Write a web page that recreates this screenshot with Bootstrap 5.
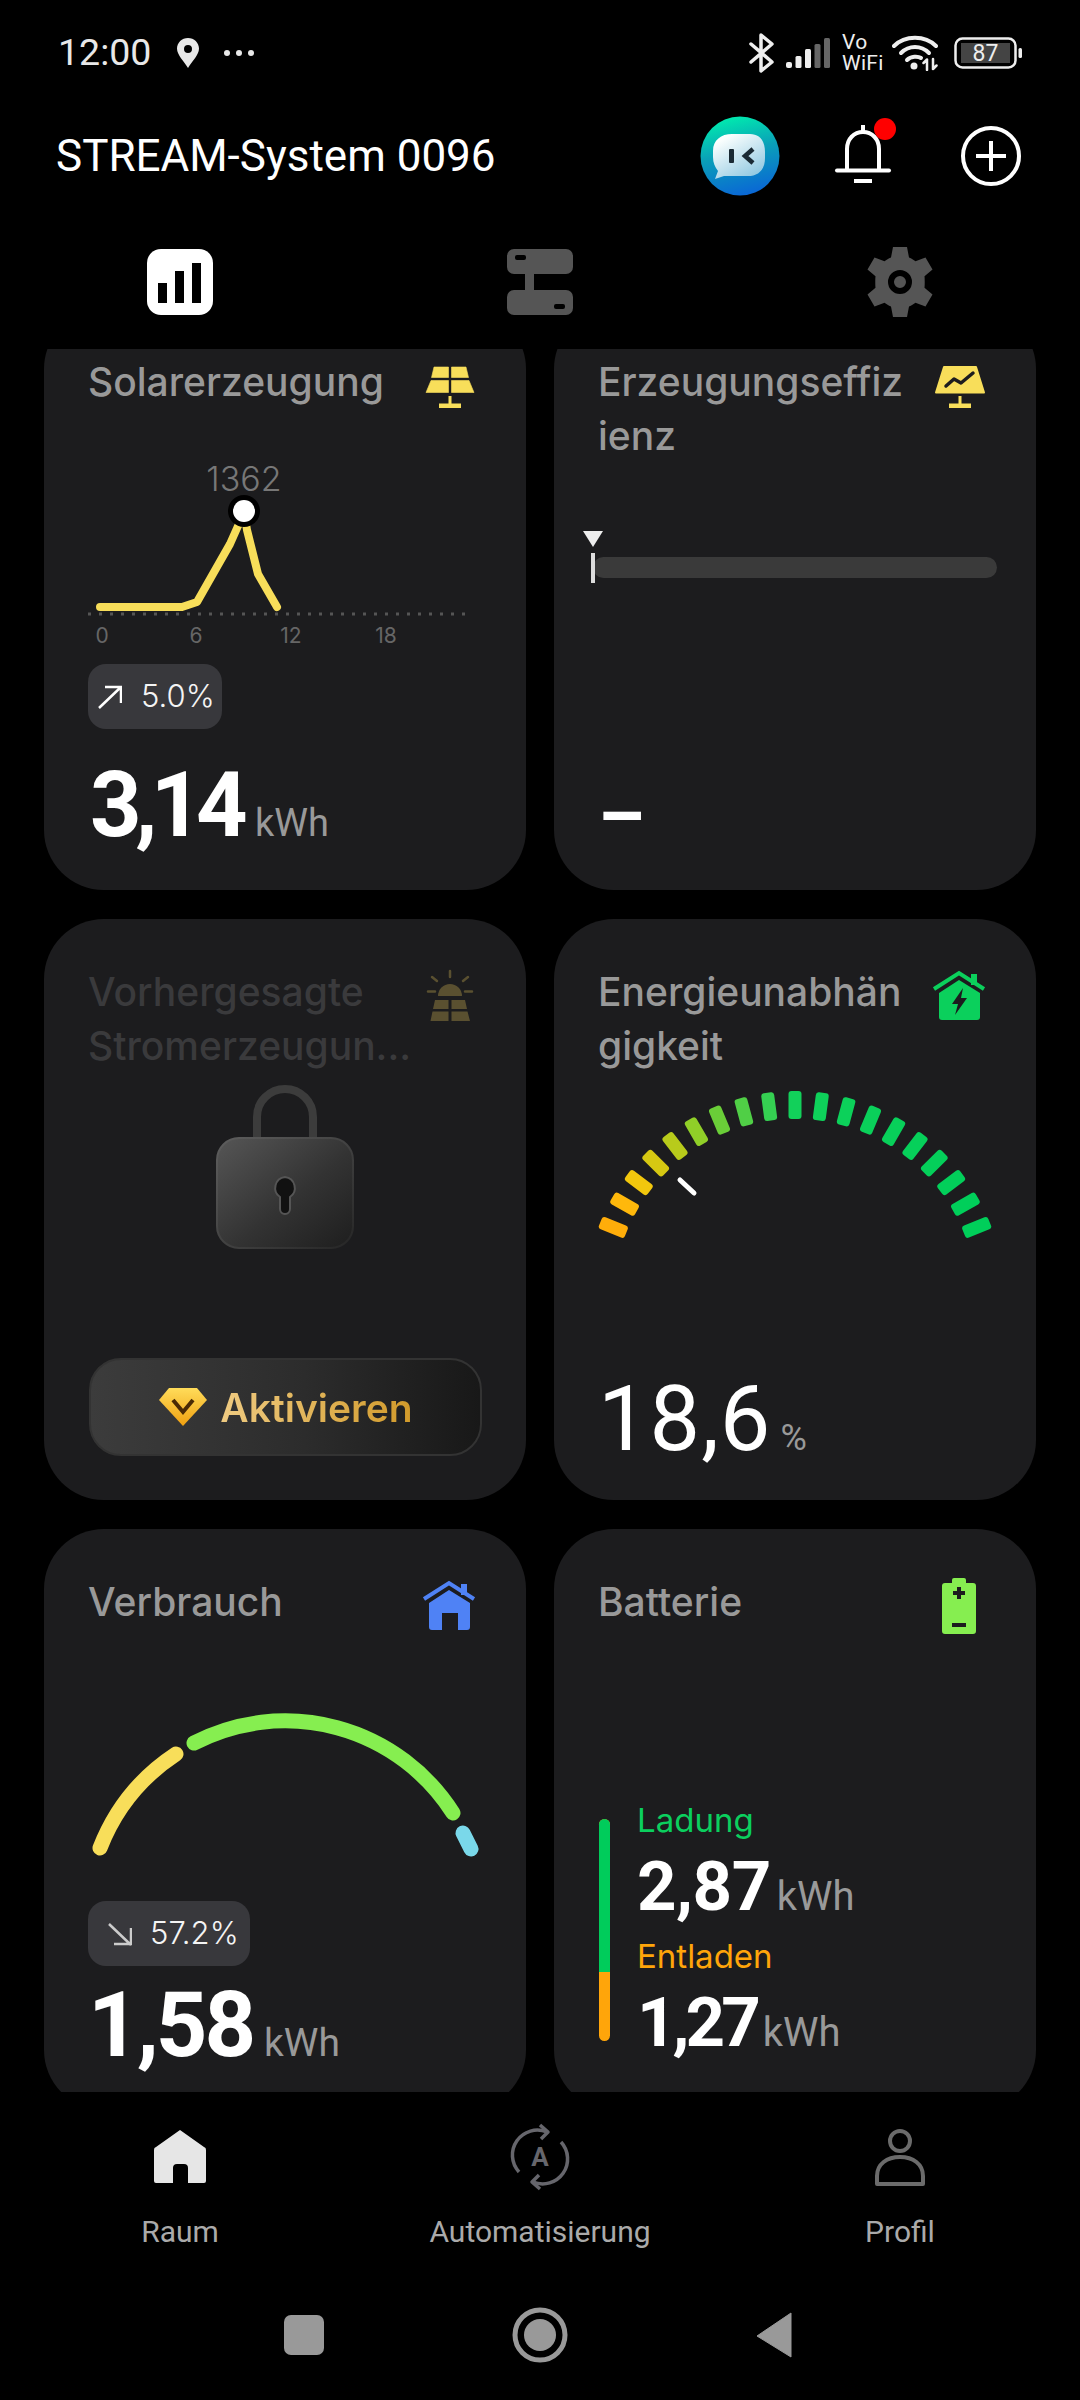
<!DOCTYPE html>
<html lang="de">

<head>
    <meta charset="UTF-8">
    <title>STREAM-System 0096</title>
    <link href="https://cdn.jsdelivr.net/npm/bootstrap@5.3.0/dist/css/bootstrap.min.css" rel="stylesheet">
    <style>
        html, body { background: #000; }
        body { width: 1080px; height: 2400px; overflow: hidden; font-family: Roboto, "Liberation Sans", sans-serif; color: #fff; }
        svg { display: block; }

        /* top area */
        .status-bar { height: 106px; padding: 0 58px; }
        .clock { font-size: 37.5px; color: #e8e8e8; line-height: 1; margin-right: 26px; }
        .vowifi { width: 42px; font-size: 21px; line-height: 21px; letter-spacing: 0.3px; color: #eee; white-space: nowrap; }
        .wifi-ico { margin: 0 4px 0 -4px; }
        .title-row { height: 100px; padding: 0 26px 0 56px; }
        .page-title { font-size: 44px; font-weight: 400; line-height: 1; margin: 0; color: #fff; }
        .act-slot { width: 125.5px; }
        .tab-row { height: 143px; padding-top: 41px; }

        /* tiles */
        .tile-scroll { flex: 1 1 0; min-height: 0; padding: 0 44px; }
        .tile-grid { --bs-gutter-x: 28px; --bs-gutter-y: 29px; margin-top: -69px; }
        .tile { --bs-card-bg: #1c1c1e; --bs-card-border-width: 0; --bs-card-border-radius: 60px; height: 581px; padding: 46px 44px 0; }
        .tile-head { height: 108px; }
        .tile-title { font-family: Inter, "Liberation Sans", sans-serif; font-size: 39px; line-height: 54px; color: #999; margin: 0; white-space: nowrap; }
        .tile-title.dim { color: #3a3a3c; }
        .tile-ico { width: 64px; height: 64px; flex: none; }
        .tile-foot { margin-top: auto; padding-bottom: 38px; }
        .foot-low { padding-bottom: 35px; }
        .foot-dash { padding-bottom: 28px; }
        .big-val { font-weight: 700; font-size: 90px; line-height: 90px; color: #fff; }
        .tight { letter-spacing: -6.5px; margin-left: 2px; }
        .tight-sm { letter-spacing: -3px; }
        .thin-val { font-weight: 400; letter-spacing: 1px; }
        .unit { font-size: 38px; color: #999; margin-left: 14px; }
        .unit-near { margin-left: 11px; font-size: 39px; }
        .pct-unit { font-size: 36px; color: #999; margin-left: 9px; }
        .dash-val { font-weight: 700; font-size: 74px; line-height: 90px; color: #fff; margin-left: 0; }
        .trend-pill { height: 65px; background: #38383c; border-radius: 18px; font-family: Inter, sans-serif; font-weight: 300; font-size: 31px; color: #f4f4f4; }
        .pill-up { width: 134px; padding-left: 10px; margin-top: 14px; gap: 19px; }
        .pill-down { width: 162px; padding-left: 20px; margin-top: 40px; gap: 18px; }

        /* solar chart */
        .peak-label { position: absolute; left: 0; width: 312px; top: 2px; text-align: center; font-family: Inter, sans-serif; font-weight: 300; font-size: 34px; line-height: 28px; color: #777; }

        /* efficiency bar */
        .eff-wrap { margin: 94px 0 0 -5px; width: 404px; }
        .eff-bar { --bs-progress-bg: #3a3a3a; --bs-progress-height: 21px; --bs-progress-border-radius: 11px; }
        .eff-tick { position: absolute; left: -2px; top: -4px; width: 4px; height: 30px; background: #ddd; }
        .eff-arrow { position: absolute; left: -10px; top: -26px; width: 0; height: 0; border-left: 10px solid transparent; border-right: 10px solid transparent; border-top: 16px solid #eee; }

        /* activate button */
        .tile-foot-btn { margin-top: auto; padding-bottom: 44px; }
        .activate-btn { width: 393px; height: 98px; margin-left: 1px; border-radius: 32px; border: 2px solid #333; background: linear-gradient(90deg, #3c3c3c, #2c2c2c 55%, #181818); gap: 12px; }
        .activate-text { font-family: Inter, sans-serif; font-weight: 600; font-size: 39px; line-height: 1; background: linear-gradient(90deg, #efcb82, #d19a2a); -webkit-background-clip: text; background-clip: text; color: transparent; }

        /* battery */
        .batt-block { margin-top: 117px; margin-left: 1px; gap: 27px; }
        .batt-bar { width: 11px; height: 222px; margin-top: 19px; border-radius: 6px; background: #ffa50a; flex: none; }
        .batt-bar-fill { height: 153px; background: #00cc5b; }
        .batt-stat { height: 136px; }
        .batt-label { font-family: Inter, sans-serif; font-size: 33px; line-height: 40px; }
        .col-charge { color: #0bcf5e; }
        .col-discharge { color: #ffa50a; }
        .batt-val { font-weight: 700; font-size: 69px; line-height: 72px; margin-top: 11px; color: #fff; }
        .batt-val .unit { font-size: 40px; font-weight: 400; margin-left: 6px; letter-spacing: 0; }
        .batt-tight { letter-spacing: -4px; }
        .batt-tight-sm { letter-spacing: -0.5px; }

        /* bottom nav */
        .bottom-nav { height: 215px; padding-top: 30px; }
        .nav-ico { height: 70px; }
        .nav-label { font-size: 30px; line-height: 40px; color: #aaa; margin-top: 20px; }
        .sys-nav { height: 93px; }
        .sys-slot { width: 236px; height: 56px; }
    </style>
</head>

<body>
    <div class="d-flex flex-column vh-100">

        <!-- status bar -->
        <div class="status-bar d-flex align-items-center flex-shrink-0">
            <span class="clock">12:00</span>
            <svg width="22" height="30" viewBox="0 0 22 30"><path fill-rule="evenodd" fill="#e8e8e8" d="M11 0C4.9 0 0 4.7 0 10.6 0 17 7 23.500 11 30c4-6.500 11-13 11-19.400C22 4.700 17.100 0 11 0ZM11 7a4 4 0 1 1 0 8 4 4 0 0 1 0-8Z"/></svg>
            <svg class="ms-4" width="32" height="8" viewBox="0 0 32 8" fill="#e8e8e8"><circle cx="4" cy="4" r="3"/><circle cx="16" cy="4" r="3"/><circle cx="28" cy="4" r="3"/></svg>
            <div class="ms-auto d-flex align-items-center status-icons" style="gap:12px">
                <svg width="25" height="40" viewBox="0 0 25 40" fill="none" stroke="#eee" stroke-width="3.500" stroke-linejoin="round" stroke-linecap="round"><path d="M2 11L23 29L12 38V2L23 11L2 29"/></svg>
                <svg width="44" height="30" viewBox="0 0 44 30"><g fill="#eee"><rect x="0" y="24" width="6" height="6" rx="2"/><rect x="9.500" y="18" width="6" height="12" rx="1.500"/><rect x="19" y="11" width="6" height="19" rx="1.500"/></g><g fill="#666"><rect x="28.500" y="6" width="6" height="24" rx="1.500"/><rect x="38" y="0" width="6" height="30" rx="1.500"/></g></svg>
                <div class="vowifi"><div>Vo</div><div>WiFi</div></div>
                <svg class="wifi-ico" width="46" height="36" viewBox="0 0 46 36" fill="none" stroke="#eee" stroke-linecap="round"><path stroke-width="4" d="M2 11C13 0 33 0 44 11"/><path stroke-width="4" d="M9 18C17 10 29 10 37 18"/><path stroke-width="4" d="M15 25C19 21 26 21 29 23"/><circle cx="22" cy="31" r="3.500" fill="#eee" stroke="none"/><path stroke-width="2.500" d="M35 35V25M31.500 28L35 24.500M41 24V34M41 34L44.500 30.500"/></svg>
                <svg width="68" height="32" viewBox="0 0 68 32"><rect x="1.500" y="1.500" width="60" height="29" rx="7" fill="none" stroke="#eee" stroke-width="2.500"/><rect x="7" y="6" width="49" height="20" fill="#444"/><text x="31.500" y="24" text-anchor="middle" font-family="Roboto, sans-serif" font-size="23" fill="#eee">87</text><rect x="64.500" y="11" width="3.500" height="10" rx="1.500" fill="#eee"/></svg>
            </div>
        </div>

        <!-- title row -->
        <div class="title-row d-flex align-items-center flex-shrink-0">
            <h1 class="page-title">STREAM-System 0096</h1>
            <div class="ms-auto d-flex">
                <div class="act-slot d-flex justify-content-center">
                    <svg width="80" height="80" viewBox="0 0 80 80">
                        <defs>
                            <linearGradient id="avatarBg" x1="0.35" y1="0" x2="0.6" y2="1"><stop offset="0" stop-color="#00ecae"/><stop offset="0.45" stop-color="#0aa0b8"/><stop offset="1" stop-color="#0a66d6"/></linearGradient>
                            <linearGradient id="avatarBubble" x1="0.2" y1="0.1" x2="0.8" y2="1"><stop offset="0" stop-color="#fbfffe"/><stop offset="1" stop-color="#8cc6e0"/></linearGradient>
                        </defs>
                        <circle cx="40" cy="40" r="39.500" fill="url(#avatarBg)"/>
                        <path d="M32 18H50C59 18 65 24 65 36V42C65 54 58 60 48 60H24L15 63L18 55C15 51 13 47 13 41V35C13 24 21 18 32 18Z" fill="url(#avatarBubble)"/>
                        <rect x="29" y="33" width="5" height="14" rx="1" fill="#1a2a34"/>
                        <path d="M53 33L45 40L53 47" fill="none" stroke="#1a2a34" stroke-width="4.500"/>
                    </svg>
                </div>
                <div class="act-slot d-flex justify-content-center">
                    <svg width="80" height="80" viewBox="0 0 80 80" fill="none" stroke="#fff" stroke-width="4">
                        <path d="M19 54H21V33C21 23 28 16 37 16S53 23 53 33V54"/>
                        <path d="M11 54.500H63" stroke-linecap="round"/>
                        <path d="M37 9V16"/>
                        <path d="M28 65H46" stroke-width="4"/>
                        <circle cx="59" cy="13" r="11" fill="#f00" stroke="none"/>
                    </svg>
                </div>
                <div class="act-slot d-flex justify-content-center">
                    <svg width="80" height="80" viewBox="0 0 80 80" fill="none" stroke="#fff" stroke-width="4">
                        <circle cx="40" cy="40" r="28"/>
                        <path d="M25 40H55M40 25V55"/>
                    </svg>
                </div>
            </div>
        </div>

        <!-- tabs -->
        <div class="tab-row row g-0 flex-shrink-0">
            <div class="col-4 d-flex justify-content-center">
                <svg width="66" height="70" viewBox="0 0 66 70"><rect y="2" width="66" height="66" rx="14" fill="#fff"/><g fill="#000"><rect x="11" y="36" width="9" height="20"/><rect x="28" y="24" width="9" height="32"/><rect x="45" y="16" width="9" height="40"/></g></svg>
            </div>
            <div class="col-4 d-flex justify-content-center">
                <svg width="66" height="70" viewBox="0 0 66 70" fill="#555"><rect y="2" width="66" height="25" rx="7"/><rect y="43" width="66" height="25" rx="7"/><rect x="18" y="26" width="9" height="18"/><rect x="8" y="8" width="11" height="5" rx="2" fill="#000"/><rect x="47" y="57" width="11" height="5" rx="2" fill="#000"/></svg>
            </div>
            <div class="col-4 d-flex justify-content-center">
                <svg width="70" height="70" viewBox="0 0 70 70"><path fill="#555" fill-rule="evenodd" d="M28 0H42L44 10.500C46.500 11.500 48.500 12.700 50.500 14.200L60.500 10.500L67.500 22.500L59.500 29.300C59.800 31.900 59.800 38.100 59.500 40.700L67.500 47.500L60.500 59.500L50.500 55.800C48.500 57.300 46.500 58.500 44 59.500L42 70H28L26 59.500C23.500 58.500 21.500 57.300 19.500 55.800L9.500 59.500L2.500 47.500L10.500 40.700C10.200 38.100 10.200 31.900 10.500 29.300L2.500 22.500L9.500 10.500L19.500 14.200C21.500 12.700 23.500 11.500 26 10.500ZM35 23A12 12 0 1 0 35 47A12 12 0 1 0 35 23ZM35 29A6 6 0 1 1 35 41A6 6 0 1 1 35 29Z"/></svg>
            </div>
        </div>

        <!-- tiles -->
        <div class="tile-scroll overflow-hidden">
            <div class="row row-cols-2 tile-grid">

                <div class="col">
                    <div class="card tile">
                        <div class="tile-head d-flex justify-content-between">
                            <h2 class="tile-title">Solarerzeugung</h2>
                            <svg class="tile-ico" viewBox="0 0 64 64" fill="#f8de5a" stroke="#f8de5a" stroke-width="0.6" stroke-linejoin="round">
                                <path d="M16 12H30.500V22.500H13.500Z"/><path d="M33.500 12H48L50.500 22.500H33.500Z"/><path d="M13 25.500H30.500V37.500H8Z"/><path d="M33.500 25.500H51L56 37.500H33.500Z"/>
                                <rect x="30.500" y="41" width="3" height="8" stroke="none"/><rect x="21" y="48.500" width="22" height="4.500" stroke="none"/>
                            </svg>
                        </div>
                        <div class="position-relative">
                            <div class="peak-label">1362</div>
                            <svg width="394" height="187" viewBox="88 463 394 187">
                                <path d="M88 614H465" stroke="#555" stroke-width="3" stroke-dasharray="3 8"/>
                                <path d="M100 607H182L197 602L230 544L238 526L244 511L247 530L258 574L277 607" fill="none" stroke="#f8de5a" stroke-width="8" stroke-linecap="round" stroke-linejoin="round"/>
                                <circle cx="244" cy="511" r="16" fill="#000"/><circle cx="244" cy="511" r="11" fill="#fff"/>
                                <g font-family="Inter, sans-serif" font-size="21" fill="#666" text-anchor="middle"><text x="102" y="643">0</text><text x="196" y="643">6</text><text x="291" y="643">12</text><text x="386" y="643">18</text></g>
                            </svg>
                        </div>
                        <div class="trend-pill pill-up d-flex align-items-center">
                            <svg width="24" height="24" viewBox="0 0 24 24" fill="none" stroke="#fff" stroke-width="2.500"><path d="M1 23L23 2M7 2H23V18"/></svg>
                            <span>5.0%</span>
                        </div>
                        <div class="tile-foot d-flex align-items-baseline">
                            <span class="big-val tight">3,14</span><span class="unit">kWh</span>
                        </div>
                    </div>
                </div>

                <div class="col">
                    <div class="card tile">
                        <div class="tile-head d-flex justify-content-between">
                            <h2 class="tile-title">Erzeugungseffiz<br>ienz</h2>
                            <svg class="tile-ico" viewBox="0 0 64 64" fill="#f8de5a" stroke="#f8de5a" stroke-linejoin="round">
                                <path d="M16 12H48L56 37.500H8Z" stroke-width="2"/>
                                <path d="M18 31L26 24L33 28L45 18" fill="none" stroke="#1c1c1e" stroke-width="3.500" stroke-linecap="round"/>
                                <rect x="30.500" y="41" width="3" height="8" stroke="none"/><rect x="21" y="48.500" width="22" height="4.500" stroke="none"/>
                            </svg>
                        </div>
                        <div class="eff-wrap position-relative">
                            <div class="progress eff-bar"><div class="progress-bar" style="width:0%"></div></div>
                            <div class="eff-tick"></div>
                            <div class="eff-arrow"></div>
                        </div>
                        <div class="tile-foot foot-dash d-flex align-items-baseline">
                            <span class="dash-val">–</span>
                        </div>
                    </div>
                </div>

                <div class="col">
                    <div class="card tile">
                        <div class="tile-head d-flex justify-content-between">
                            <h2 class="tile-title dim">Vorhergesagte<br>Stromerzeugun...</h2>
                            <svg class="tile-ico" viewBox="0 0 64 64" fill="#5a5030">
                                <path d="M20 31A12 12 0 0 1 44 31Z"/>
                                <path d="M32 6V12M14 12L19 16M50 12L45 16M10 26.500H17M47 26.500H54" stroke="#5a5030" stroke-width="2.500" stroke-linecap="round"/>
                                <path d="M17 35H30.500V44H15ZM33.500 35H47L49 44H33.500ZM14.500 46.500H30.500V56H12.500ZM33.500 46.500H49.500L52 56H33.500Z"/>
                            </svg>
                        </div>
                        <svg class="mx-auto" width="150" height="185" viewBox="210 1075 150 185">
                            <defs>
                                <linearGradient id="lockBody" x1="0" y1="0" x2="1" y2="1"><stop offset="0" stop-color="#565656"/><stop offset="0.55" stop-color="#333"/><stop offset="1" stop-color="#1e1e1e"/></linearGradient>
                                <linearGradient id="lockEdge" x1="0" y1="0" x2="1" y2="1"><stop offset="0" stop-color="#5e5e5e"/><stop offset="1" stop-color="#262626"/></linearGradient>
                            </defs>
                            <path d="M257 1142V1119A28 28 0 0 1 313 1119V1142" fill="none" stroke="#3c3c3c" stroke-width="8"/>
                            <rect x="217" y="1140" width="136" height="110" rx="22" fill="url(#lockBody)" stroke="url(#lockEdge)" stroke-width="2"/>
                            <path d="M285 1179A11 11 0 0 1 290 1199V1211A5 5 0 0 1 280 1211V1199A11 11 0 0 1 285 1179Z" fill="#111" stroke="#555" stroke-width="2"/>
                        </svg>
                        <div class="tile-foot-btn">
                            <button type="button" class="btn activate-btn d-flex align-items-center justify-content-center">
                                <svg width="50" height="40" viewBox="0 0 50 40">
                                    <defs><linearGradient id="gem" x1="0" y1="0" x2="0" y2="1"><stop offset="0" stop-color="#ffdc5a"/><stop offset="1" stop-color="#f0a010"/></linearGradient></defs>
                                    <path d="M11 1H39L49 13L25 39L1 13Z" fill="url(#gem)"/>
                                    <path d="M15 13L25 25L35 13" fill="none" stroke="#4a2a05" stroke-width="4"/>
                                </svg>
                                <span class="activate-text">Aktivieren</span>
                            </button>
                        </div>
                    </div>
                </div>

                <div class="col">
                    <div class="card tile">
                        <div class="tile-head d-flex justify-content-between">
                            <h2 class="tile-title">Energieunabhän<br>gigkeit</h2>
                            <svg class="tile-ico" viewBox="0 0 64 64" fill="#0bd05c">
                                <path d="M6 24L31 8L56 24" fill="none" stroke="#0bd05c" stroke-width="4"/>
                                <rect x="43" y="9" width="6" height="11"/>
                                <path d="M11 28L31 15L52 28V52A3 3 0 0 1 49 55H14A3 3 0 0 1 11 52Z"/>
                                <path d="M35 23L24 39H30L27 50L39 33H33Z" fill="#1c1c1e"/>
                            </svg>
                        </div>
                        <svg id="selfGauge" width="394" height="167" viewBox="598 1073 394 167"></svg>
                        <div class="tile-foot foot-low d-flex align-items-baseline">
                            <span class="big-val thin-val">18,6</span><span class="pct-unit">%</span>
                        </div>
                    </div>
                </div>

                <div class="col">
                    <div class="card tile">
                        <div class="tile-head d-flex justify-content-between">
                            <h2 class="tile-title">Verbrauch</h2>
                            <svg class="tile-ico" viewBox="0 0 64 64" fill="#4f82f5">
                                <path d="M6 24L31 8L56 24" fill="none" stroke="#4f82f5" stroke-width="4"/>
                                <rect x="43" y="9" width="6" height="11"/>
                                <path fill-rule="evenodd" d="M11 28L31 15L52 28V52A3 3 0 0 1 49 55H40V38H24V55H14A3 3 0 0 1 11 52Z"/>
                            </svg>
                        </div>
                        <svg width="394" height="178" viewBox="88 1683 394 178" fill="none" stroke-width="15" stroke-linecap="round">
                            <path d="M100 1848A199 199 0 0 1 176 1754" stroke="#f8de5a"/>
                            <path d="M194 1743A199 199 0 0 1 453 1813" stroke="#86ee50"/>
                            <path d="M463 1833L471 1849" stroke="#7ad8ea"/>
                        </svg>
                        <div class="trend-pill pill-down d-flex align-items-center">
                            <svg width="24" height="24" viewBox="0 0 24 24" fill="none" stroke="#ccc" stroke-width="2.500"><path d="M1 2L23 23M6 22H23V6"/></svg>
                            <span>57.2%</span>
                        </div>
                        <div class="tile-foot d-flex align-items-baseline">
                            <span class="big-val tight-sm">1,58</span><span class="unit unit-near">kWh</span>
                        </div>
                    </div>
                </div>

                <div class="col">
                    <div class="card tile">
                        <div class="tile-head d-flex justify-content-between">
                            <h2 class="tile-title">Batterie</h2>
                            <svg class="tile-ico" viewBox="0 0 64 64" fill="#86ee50">
                                <path d="M24 5A2 2 0 0 1 26 3H36A2 2 0 0 1 38 5V8H45A3 3 0 0 1 48 11V56A3 3 0 0 1 45 59H17A3 3 0 0 1 14 56V11A3 3 0 0 1 17 8H24Z"/>
                                <path d="M29 12H33V16H37V20H33V24H29V20H25V16H29Z" fill="#1c1c1e"/>
                                <rect x="24" y="48" width="14" height="4" fill="#1c1c1e"/>
                            </svg>
                        </div>
                        <div class="batt-block d-flex">
                            <div class="batt-bar overflow-hidden"><div class="batt-bar-fill"></div></div>
                            <div>
                                <div class="batt-stat">
                                    <div class="batt-label col-charge">Ladung</div>
                                    <div class="batt-val batt-tight-sm">2,87<span class="unit">kWh</span></div>
                                </div>
                                <div class="batt-stat">
                                    <div class="batt-label col-discharge">Entladen</div>
                                    <div class="batt-val batt-tight">1,27<span class="unit">kWh</span></div>
                                </div>
                            </div>
                        </div>
                    </div>
                </div>

            </div>
        </div>

        <!-- bottom nav -->
        <div class="bottom-nav row g-0 flex-shrink-0 text-center">
            <div class="col-4">
                <svg class="nav-ico mx-auto" width="60" height="70" viewBox="0 0 60 70"><path fill="#e6e6e6" fill-rule="evenodd" d="M30 8L54 25A3 3 0 0 1 56 28V59A2 2 0 0 1 54 61H38V46A4 4 0 0 0 34 42H27A4 4 0 0 0 23 46V61H6A2 2 0 0 1 4 59V28A3 3 0 0 1 6 25Z"/></svg>
                <div class="nav-label">Raum</div>
            </div>
            <div class="col-4">
                <svg class="nav-ico mx-auto" width="60" height="70" viewBox="0 0 60 70" fill="none" stroke="#66666c" stroke-width="3.500">
                    <path d="M37 10A25 25 0 0 0 9 50"/>
                    <path d="M23 60A25 25 0 0 0 51 20"/>
                    <path d="M30 3L38 10L31 17" stroke-linejoin="round"/>
                    <path d="M30 67L22 60L29 53" stroke-linejoin="round"/>
                    <text x="30" y="44" text-anchor="middle" font-family="Roboto, sans-serif" font-weight="700" font-size="26" fill="#66666c" stroke="none">A</text>
                </svg>
                <div class="nav-label">Automatisierung</div>
            </div>
            <div class="col-4">
                <svg class="nav-ico mx-auto" width="60" height="70" viewBox="0 0 60 70" fill="none" stroke="#6b6b6b" stroke-width="4">
                    <circle cx="30" cy="19" r="10"/>
                    <path d="M7 62V54C7 42 17 35 30 35S53 42 53 54V62Z" stroke-linejoin="round"/>
                </svg>
                <div class="nav-label">Profil</div>
            </div>
        </div>

        <!-- system nav -->
        <div class="sys-nav d-flex justify-content-center align-items-start flex-shrink-0">
            <div class="sys-slot d-flex justify-content-center align-items-center"><svg width="40" height="40" viewBox="0 0 40 40"><rect width="40" height="40" rx="7" fill="#999"/></svg></div>
            <div class="sys-slot d-flex justify-content-center align-items-center"><svg width="56" height="56" viewBox="0 0 56 56"><circle cx="28" cy="28" r="25" fill="none" stroke="#999" stroke-width="5"/><circle cx="28" cy="28" r="16" fill="#999"/></svg></div>
            <div class="sys-slot d-flex justify-content-center align-items-center"><svg class="me-1" width="38" height="46" viewBox="0 0 38 46"><path d="M36 1V45L2 24Z" fill="#999" stroke="#999" stroke-linejoin="round"/></svg></div>
        </div>
    </div>

    <script>
        // self sufficiency gauge: 19 segments on an arc
        const gauge = document.getElementById('selfGauge');
        const colors = ['#ffad0a', '#ffb80b', '#f2c70d', '#d6c812', '#b8cb1b', '#90cf28', '#6ace38', '#50cf46', '#35d052', '#12d05a',
            '#0ed15a', '#0cd15a', '#0ad05a', '#08d05a', '#06d05a', '#04cf5a', '#02cf5a', '#00cf5a', '#00cf5a'];
        const cx = 795, cy = 1301, radius = 196, step = 7.55;
        let markup = '';
        colors.forEach((c, i) => {
            const deg = (i - 9) * step;
            const rad = deg * Math.PI / 180;
            const x = (cx + radius * Math.sin(rad)).toFixed(1);
            const y = (cy - radius * Math.cos(rad)).toFixed(1);
            markup += '<rect x="-6.5" y="-14" width="13" height="28" rx="3" fill="' + c + '" transform="translate(' + x + ' ' + y + ') rotate(' + deg + ')"/>';
        });
        markup += '<path d="M680 1180L694 1193" stroke="#fff" stroke-width="5" stroke-linecap="round"/>';
        gauge.innerHTML = markup;
    </script>
</body>

</html>
